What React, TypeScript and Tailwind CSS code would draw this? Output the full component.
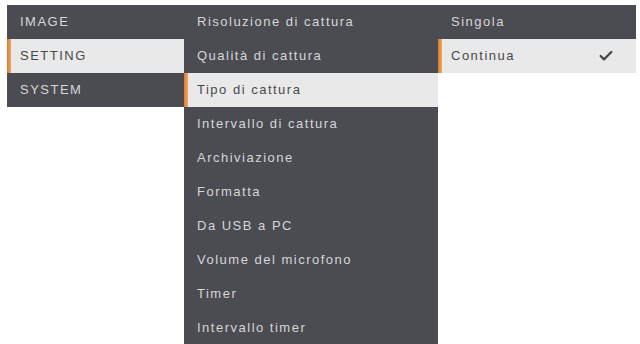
import { Check } from "lucide-react";

type Row = { label: string; active?: boolean; checked?: boolean };

const main: Row[] = [{ label: "IMAGE" }, { label: "SETTING", active: true }, { label: "SYSTEM" }];

const sub: Row[] = [
  { label: "Risoluzione di cattura" },
  { label: "Qualità di cattura" },
  { label: "Tipo di cattura", active: true },
  { label: "Intervallo di cattura" },
  { label: "Archiviazione" },
  { label: "Formatta" },
  { label: "Da USB a PC" },
  { label: "Volume del microfono" },
  { label: "Timer" },
  { label: "Intervallo timer" },
];

const options: Row[] = [{ label: "Singola" }, { label: "Continua", active: true, checked: true }];

function MenuItem({ row }: { row: Row }) {
  if (row.active) {
    return (
      <div className="flex h-[34px] items-center bg-[#e9e9e9]">
        <div className="h-full w-[4px] bg-gradient-to-r from-[#e07a2a] to-[#f0a860]" />
        <span className="flex-1 pl-[9px] text-[13px] tracking-[1.5px] text-[#48484c]">{row.label}</span>
        {row.checked && <Check className="mr-[22px] h-[16px] w-[16px] text-[#48484c]" strokeWidth={3.5} />}
      </div>
    );
  }
  return (
    <div className="flex h-[34px] items-center bg-[#4b4c51] pl-[13px] text-[13px] tracking-[1.5px] text-[#d6d6d8]">
      {row.label}
    </div>
  );
}

function Column({ rows, width }: { rows: Row[]; width: string }) {
  return (
    <div className={`flex flex-col ${width}`}>
      {rows.map((r) => (
        <MenuItem key={r.label} row={r} />
      ))}
    </div>
  );
}

export default function App() {
  return (
    <div
      className="h-[344px] w-[640px] overflow-hidden bg-white pl-[7px] pt-[5px]"
      style={{ fontFamily: '"Liberation Sans", Arial, sans-serif' }}
    >
      <div className="flex items-start">
        <Column rows={main} width="w-[177px]" />
        <Column rows={sub} width="w-[254px]" />
        <Column rows={options} width="w-[198px]" />
      </div>
    </div>
  );
}
